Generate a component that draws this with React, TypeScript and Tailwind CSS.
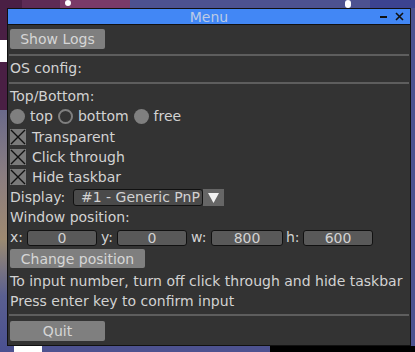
import React from "react";

const font = { fontFamily: '"DejaVu Sans", sans-serif' };

function Radio({ hollow }: { hollow?: boolean }) {
  return hollow ? (
    <span className="inline-block w-[15px] h-[15px] rounded-full border-[2px] border-[#7f7f7f] box-border" />
  ) : (
    <span className="inline-block w-[15px] h-[15px] rounded-full bg-[#7f7f7f]" />
  );
}

function Check({ label }: { label: string }) {
  return (
    <div className="h-[20px] flex items-center">
      <span className="w-[16px] h-[16px] bg-[#7a7a7a] flex items-center justify-center">
        <svg width="16" height="16" viewBox="0 0 16 16">
          <path d="M1 1 L15 15 M15 1 L1 15" stroke="#111" strokeWidth="1.4" />
        </svg>
      </span>
      <span className="ml-[6px]">{label}</span>
    </div>
  );
}

function Field({ label, value, labelW, boxW }: { label: string; value: string; labelW: number; boxW: number }) {
  return (
    <>
      <span style={{ width: labelW }} className="inline-block">{label}</span>
      <span
        style={{ width: boxW }}
        className="h-[16px] bg-[#595959] border border-[#111] rounded-[3px] flex items-center justify-center text-[14px] leading-none"
      >
        {value}
      </span>
    </>
  );
}

function Sep() {
  return <div className="h-[2px] bg-[#5e5e5e] mx-[-1px]" />;
}

export default function App() {
  return (
    <div className="relative w-[415px] h-[352px] overflow-hidden bg-[#4d5290]" style={font}>
      {/* wallpaper */}
      <div className="absolute left-0 top-0 w-[130px] h-[110px] bg-[#5e2b55]" />
      <div className="absolute left-0 top-0 w-[22px] h-[110px] bg-[#4a1f44]" />
      <div className="absolute left-[60px] top-0 w-[70px] h-[8px] bg-[#7a3a68]" />
      <div className="absolute left-0 top-[110px] w-[10px] h-[130px] bg-[linear-gradient(180deg,#6a6a8a,#8a7d80,#a08a70)]" />
      <div className="absolute left-0 top-[240px] w-[10px] h-[112px] bg-[linear-gradient(180deg,#9a8a72,#5a5f90,#4a5090)]" />
      <div className="absolute left-0 top-[40px] w-[8px] h-[22px] bg-white" />
      <div className="absolute left-[65px] top-0 w-[6px] h-[6px] bg-white rounded-full" />
      <div className="absolute left-[345px] top-0 w-[6px] h-[8px] bg-white rounded-full" />
      <div className="absolute left-[370px] top-0 w-[45px] h-[8px] bg-[#3c4390]" />
      <div className="absolute left-[270px] top-[346px] w-[145px] h-[6px] bg-black" />
      <div className="absolute left-[14px] top-[346px] w-[28px] h-[6px] bg-white" />

      {/* window */}
      <div className="absolute left-[7px] top-[8px] w-[404px] h-[338px] border border-[#111] bg-[#333333] flex flex-col text-[14px] text-[#d2d2d2]">
        <div className="h-[15px] bg-[#4287f5] relative flex items-center justify-center border-b border-[#111] box-content">
          <span className="text-[#bccbe6] text-[14px] leading-none">Menu</span>
          <div className="absolute right-[6px] top-0 h-full flex items-center gap-[8px]">
            <span className="w-[7px] h-[2px] bg-[#111]" />
            <svg width="9" height="9" viewBox="0 0 9 9">
              <path d="M1 1 L8 8 M8 1 L1 8" stroke="#111" strokeWidth="1.6" />
            </svg>
          </div>
        </div>
        <div className="flex flex-col px-[2px] pt-[4px]">
          <button className="w-[95px] h-[20px] bg-[#7f7f7f] rounded-[2px] text-[#d6d6d6] text-[14px] leading-none flex items-center justify-center">
            Show Logs
          </button>
          <div className="h-[5px]" />
          <Sep />
          <div className="h-[20px] flex items-center mt-[2px]">OS config:</div>
          <div className="h-[4px]" />
          <Sep />
          <div className="h-[20px] flex items-center mt-[2px]">Top/Bottom:</div>
          <div className="h-[20px] flex items-center">
            <Radio />
            <span className="ml-[5px]">top</span>
            <span className="ml-[5px] flex"><Radio hollow /></span>
            <span className="ml-[5px]">bottom</span>
            <span className="ml-[5px] flex"><Radio /></span>
            <span className="ml-[5px]">free</span>
          </div>
          <div className="mt-[1px]" />
          <Check label="Transparent" />
          <Check label="Click through" />
          <Check label="Hide taskbar" />
          <div className="h-[20px] flex items-center">
            <span className="w-[63px]">Display:</span>
            <span className="w-[130px] h-[17px] border border-[#111] rounded-[3px] bg-[#4a4a4a] overflow-hidden whitespace-nowrap pl-[7px] flex items-center leading-none">
              #1 - Generic PnP
            </span>
            <span className="w-[21px] h-[17px] bg-[#666666] flex items-center justify-center">
              <svg width="11" height="11" viewBox="0 0 11 11">
                <path d="M0 1 L11 1 L5.5 11 Z" fill="#f2f2f2" />
              </svg>
            </span>
          </div>
          <div className="h-[20px] flex items-center">Window position:</div>
          <div className="h-[21px] flex items-center">
            <Field label="x:" value="0" labelW={17} boxW={70} />
            <span className="w-[4px]" />
            <Field label="y:" value="0" labelW={16} boxW={70} />
            <span className="w-[4px]" />
            <Field label="w:" value="800" labelW={20} boxW={72} />
            <span className="w-[3px]" />
            <Field label="h:" value="600" labelW={17} boxW={70} />
          </div>
          <button className="w-[135px] h-[19px] mt-[1px] bg-[#7f7f7f] rounded-[2px] text-[#d6d6d6] text-[14px] leading-none flex items-center justify-center">
            Change position
          </button>
          <div className="h-[20px] flex items-center mt-[3px] whitespace-nowrap">To input number, turn off click through and hide taskbar</div>
          <div className="h-[20px] flex items-center">Press enter key to confirm input</div>
          <div className="h-[3px]" />
          <Sep />
          <div className="h-[5px]" />
          <button className="w-[95px] h-[20px] bg-[#7f7f7f] rounded-[2px] text-[#d6d6d6] text-[14px] leading-none flex items-center justify-center">
            Quit
          </button>
        </div>
      </div>
    </div>
  );
}
